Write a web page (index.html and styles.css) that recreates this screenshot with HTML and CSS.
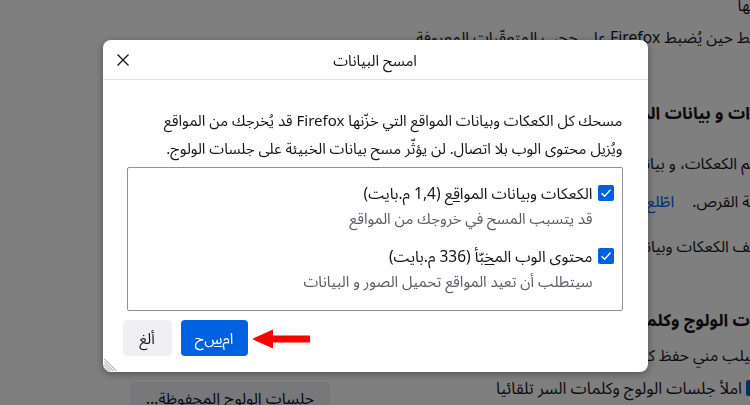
FILE: index.html
```html
<!DOCTYPE html>
<html lang="ar" dir="rtl">
<head>
<meta charset="utf-8">
<title>امسح البيانات</title>
<link rel="stylesheet" href="styles.css">
</head>
<body>
<main class="page">
  <p class="bg-line l1">&zwj;ها</p>
  <p class="bg-line l2">&zwj;ط حين يُضبط Firefox على حجب المتعقّبات المعروفة</p>
  <h2 class="bg-head h1a">ات و بيانات المواقع</h2>
  <p class="bg-line l3">&zwj;م الكعكات، و بيانات المواقع وذاكرة التخزين</p>
  <p class="bg-line l4">&zwj;ة القرص. <a class="bg-link">اطّلع على المزيد</a></p>
  <p class="bg-line l5">&zwj;ف الكعكات وبيانات المواقع عند إغلاق Firefox</p>
  <h2 class="bg-head h1b">ت الولوج وكلمات السر</h2>
  <p class="bg-line l6">&zwj;يلب مني حفظ كلمات السر</p>
  <div class="bg-row">
    <label class="bg-check"><span class="bg-box"></span><span>املأ جلسات الولوج وكلمات السر تلقائيا</span></label>
    <span class="bg-btn">جلسات الولوج المحفوظة…</span>
  </div>
</main>

<div class="overlay">
  <section class="dialog">
    <header class="dlg-head">
      <h1 class="dlg-title">امسح البيانات</h1>
      <span class="dlg-close" aria-label="أغلق">
        <svg viewBox="0 0 12 12" width="12" height="12"><path d="M0.5 0.5 11.5 11.5 M11.5 0.5 0.5 11.5" stroke="#15141a" stroke-width="1.3" fill="none"/></svg>
      </span>
    </header>
    <div class="dlg-body">
      <p class="dlg-desc">مسحك كل الكعكات وبيانات المواقع التي خزّنها Firefox قد يُخرجك من المواقع<br>ويُزيل محتوى الوب بلا اتصال. لن يؤثّر مسح بيانات الخبيئة على جلسات الولوج.</p>
      <div class="options">
        <div class="opt">
          <label class="opt-row">
            <span class="cb"><svg viewBox="0 0 16 16" width="16" height="16"><path d="M3.6 8.2 6.6 11.2 12.6 4.6" stroke="#fff" stroke-width="1.4" fill="none"/></svg></span>
            <span class="opt-label">الكعكات وبيانات الموا<u>ق</u>ع (1,4 م.بايت)</span>
          </label>
          <p class="opt-note">قد يتسبب المسح في خروجك من المواقع</p>
        </div>
        <div class="opt">
          <label class="opt-row">
            <span class="cb"><svg viewBox="0 0 16 16" width="16" height="16"><path d="M3.6 8.2 6.6 11.2 12.6 4.6" stroke="#fff" stroke-width="1.4" fill="none"/></svg></span>
            <span class="opt-label">محتوى الوب الم<u>خ</u>بّأ (336 م.بايت)</span>
          </label>
          <p class="opt-note">سيتطلب أن تعيد المواقع تحميل الصور و البيانات</p>
        </div>
      </div>
      <div class="actions">
        <span class="btn btn-primary">ام<u>س</u>ح</span>
        <span class="btn btn-cancel">ألغ</span>
      </div>
    </div>
    <svg class="arrow" viewBox="0 0 58 20" width="58" height="20"><polygon points="0,10 21,0.5 21,19.5" fill="#f00"/><rect x="19" y="6.5" width="39" height="7" fill="#f00"/></svg>
    <svg class="grip" viewBox="0 0 14 14" width="14" height="14"><path d="M0 1.5 12.5 14 M0 4.5 9.5 14 M0 7.5 6.5 14 M0 10.5 3.5 14" stroke="#8f8f9d" stroke-width="1" fill="none"/></svg>
  </section>
</div>
</body>
</html>
```

FILE: styles.css
```css
* { box-sizing: border-box; }
html, body { margin: 0; height: 100%; }
body {
  background: #fff;
  color: #15141a;
  font-family: "Segoe UI", "Noto Sans", "Noto Sans Arabic", "DejaVu Sans", sans-serif;
  font-size: 15px;
  overflow: hidden;
  direction: rtl;
}
u { text-decoration: underline; text-underline-offset: 2px; }

/* background preferences page */
.page { padding-left: 130px; }
.bg-line { margin: 0; font-size: 15.7px; line-height: 22px; white-space: nowrap; }
.bg-head { margin: 0; font-size: 17px; font-weight: 700; line-height: 26px; white-space: nowrap; }
.l1 { margin-top: -6px; }
.l2 { margin-top: 10px; }
.h1a { margin-top: 52px; }
.l3 { margin-top: 26px; }
.l4 { margin-top: 16px; }
.l5 { margin-top: 23px; }
.h1b { margin-top: 50px; }
.l6 { margin-top: 11px; }
.bg-link { color: #0061e0; margin-right: 14px; }
.bg-row {
  margin-top: 12px;
  margin-right: -12px;
  display: flex;
  justify-content: space-between;
  align-items: flex-start;
}
.bg-check { display: flex; align-items: center; gap: 4px; line-height: 20px; font-size: 16.3px; }
.bg-box { width: 16px; height: 16px; border-radius: 2px; background: #0061e0; }
.bg-btn {
  margin-top: 4px;
  width: 200px;
  height: 32px;
  background: #f0f0f4;
  border-radius: 4px;
  display: flex;
  align-items: center;
  justify-content: center;
  line-height: 32px;
  font-size: 16px;
}

/* overlay + dialog */
.overlay {
  position: fixed;
  inset: 0;
  background: rgba(0, 0, 0, 0.5);
  display: flex;
  justify-content: center;
  align-items: flex-start;
  padding-top: 40px;
}
.dialog {
  position: relative;
  width: 545px;
  height: 332px;
  background: #fff;
  border-radius: 8px;
  box-shadow: 0 2px 8px rgba(0, 0, 0, 0.35);
}
.dlg-head {
  height: 40px;
  border-bottom: 1px solid #e0e0e6;
  display: flex;
  align-items: center;
  justify-content: center;
  position: relative;
}
.dlg-title { margin: 0; font-size: 15px; font-weight: 400; line-height: 20px; }
.dlg-close {
  position: absolute;
  left: 14px;
  top: 14px;
  width: 12px;
  height: 12px;
  display: flex;
}
.dlg-body { padding: 0 25px 0 24px; }
.dlg-desc { margin: 26px 0 0; line-height: 28px; }
.options {
  margin-top: 5px;
  height: 144px;
  border: 1px solid #8f8f9d;
  border-radius: 2px;
  padding: 13px 8px 0 0;
}
.opt + .opt { margin-top: 13px; }
.opt-row { display: flex; align-items: center; gap: 5px; line-height: 24px; }
.opt-label { font-size: 15.5px; }
.cb {
  width: 16px;
  height: 16px;
  border-radius: 2px;
  background: #0061e0;
  display: flex;
}
.opt-note { margin: 0; padding-right: 21px; line-height: 26px; color: #5b5b66; }
.actions {
  margin-top: 9px;
  margin-left: -4px;
  display: flex;
  justify-content: flex-end;
  gap: 9px;
}
.btn {
  height: 36px;
  border-radius: 4px;
  display: flex;
  align-items: center;
  justify-content: center;
  line-height: 36px;
}
.btn-primary { width: 67px; background: #0061e0; color: #fff; }
.btn-cancel { width: 49px; background: #f0f0f4; color: #15141a; }
.arrow { position: absolute; left: 149px; top: 289px; }
.grip { position: absolute; left: 1px; bottom: 1px; }
```
